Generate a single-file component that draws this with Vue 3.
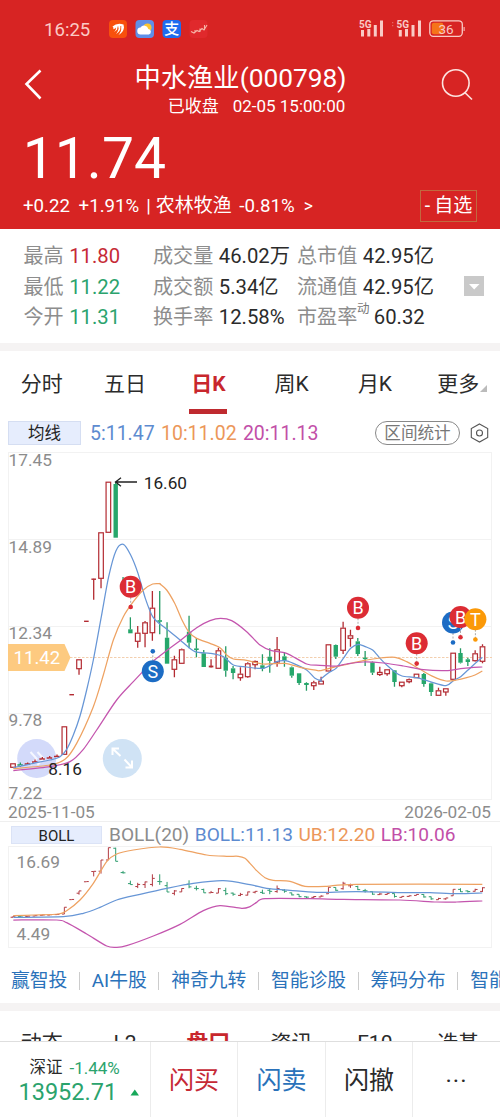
<script setup>
const round = (n) => Math.round(n * 100) / 100
const STEP = 7.336
const px = (i) => round(13 + i * STEP)

// [index, colour, high, low, bodyTop, bodyBottom] on the price chart's scale
const raw = [
  [0, 'r', 763.3, 767.3, 763.3, 767.3],
  [1, 'g', 762.5, 767, 764, 766],
  [2, 'r', 762.5, 765, 763, 764.5],
  [3, 'r', 759.5, 763, 761, 762.5],
  [4, 'r', 757, 760.5, 758, 759.5],
  [5, 'r', 756, 759, 757, 758.5],
  [6, 'r', 754.5, 757, 755.5, 756.5],
  [7, 'r', 726.3, 754.3, 726.3, 754.3],
  [8, 'r', 694.7, 694.7, 694.3, 695.1],
  [9, 'r', 659.3, 674.7, 659.3, 668.7],
  [10, 'r', 621.3, 621.3, 620.9, 621.7],
  [11, 'r', 579.3, 599.7, 578.8, 579.6],
  [12, 'r', 532.3, 588.3, 532.3, 578.3],
  [13, 'r', 481.7, 532.3, 481.7, 532.3],
  [14, 'g', 481.7, 537.7, 484, 537.7],
  [15, 'g', 577, 588, 584, 585],
  [16, 'g', 617.3, 633.3, 629.3, 633.3],
  [17, 'r', 626, 647.7, 632.7, 641.3],
  [18, 'r', 621, 647.3, 622.3, 633.3],
  [19, 'r', 591, 640.7, 607.7, 632.7],
  [20, 'g', 591, 634.3, 620.5, 621.5],
  [21, 'g', 622.3, 663.7, 637.7, 663.7],
  [22, 'r', 655.7, 677.3, 659.3, 669.3],
  [23, 'r', 648.5, 663.5, 649.3, 663.3],
  [24, 'g', 615.7, 648.3, 631.7, 642.7],
  [25, 'g', 638, 657.3, 648.7, 649.7],
  [26, 'g', 650, 667, 653.3, 667],
  [27, 'r', 659.3, 667.5, 665.9, 667.1],
  [28, 'r', 647.7, 668.3, 650.3, 668.3],
  [29, 'g', 646.3, 676.7, 658, 670.7],
  [30, 'g', 666, 679.3, 668.3, 673],
  [31, 'r', 667.3, 680.7, 673.7, 677.7],
  [32, 'r', 662.3, 677.7, 663.3, 676.7],
  [33, 'r', 660.5, 669.3, 661, 664.7],
  [34, 'g', 654.3, 671.3, 665.3, 668.7],
  [35, 'g', 648.3, 672.7, 656.7, 661],
  [36, 'r', 637, 666.7, 649.3, 662],
  [37, 'g', 652, 666.7, 656.3, 660.7],
  [38, 'g', 666.5, 677.7, 667.3, 675.7],
  [39, 'g', 673.3, 685, 673.3, 683],
  [40, 'g', 682.3, 690.7, 683.3, 684.7],
  [41, 'r', 680.7, 690, 682.3, 685.7],
  [42, 'r', 676.7, 684, 680.7, 684],
  [43, 'r', 644.3, 671, 644.3, 671],
  [44, 'g', 644.5, 659, 645, 656.7],
  [45, 'r', 621.7, 654, 627.7, 650.3],
  [46, 'r', 629.7, 646.7, 635.3, 638.3],
  [47, 'g', 638, 656, 641.3, 654],
  [48, 'g', 651, 666, 658, 658.8],
  [49, 'g', 661.5, 675, 662.3, 672.7],
  [50, 'r', 666.7, 676, 671.9, 674.5],
  [51, 'r', 669.3, 675.7, 669.3, 673.7],
  [52, 'g', 670, 686.7, 670.3, 682],
  [53, 'r', 681.7, 687.3, 681.7, 685.7],
  [54, 'r', 678.5, 683.3, 679.2, 681.7],
  [55, 'r', 673.7, 677.7, 673.7, 677.7],
  [56, 'g', 673, 686.7, 674, 684],
  [57, 'g', 682.5, 696, 683.3, 692],
  [58, 'r', 687.7, 695.3, 690.3, 695.3],
  [59, 'r', 688.3, 695.7, 688.3, 692],
  [60, 'r', 652.7, 679.3, 652.7, 679.3],
  [61, 'g', 648.3, 663.5, 653, 662.7],
  [62, 'g', 657.7, 666, 659.3, 662],
  [63, 'r', 650.3, 661.5, 653.3, 660.7],
  [64, 'r', 644.3, 663.3, 646.3, 661.3],
]
const candles = raw.map(([i, c, hi, lo, top, bottom]) => ({
  x: px(i), c, hi, lo, top, bottom, h: round(bottom - top),
  tiny: bottom - top < 2.2, early: i > 0 && i < 7,
}))

// the same quotes as open-high-low-close bars on the BOLL scale
const by = (y) => round(846.8 + (y - 478.1) * 0.2435)
const bars = candles.map((k) => {
  const open = by(k.c === 'r' ? k.bottom : k.top)
  const close = by(k.c === 'r' ? k.top : k.bottom)
  return {
    c: k.c,
    d: `M${k.x - 2.4} ${open}H${k.x}M${k.x} ${close}H${k.x + 2.4}M${k.x} ${by(k.hi)}V${by(k.lo)}`,
  }
})

// smooth curve through the points
function curve(p) {
  let d = `M${p[0][0]} ${p[0][1]}`
  for (let i = 0; i < p.length - 1; i++) {
    const a = p[i - 1] || p[i], b = p[i], c = p[i + 1], e = p[i + 2] || c
    const t = 7
    d += `C${round(b[0] + (c[0] - a[0]) / t)} ${round(b[1] + (c[1] - a[1]) / t)} ${round(c[0] - (e[0] - b[0]) / t)} ${round(c[1] - (e[1] - b[1]) / t)} ${c[0]} ${c[1]}`
  }
  return d
}
const seg = (ox, oy, pts) => pts.map(([x, y]) => [round(ox + x / 3), round(oy + y / 3)])

const ma5 = curve([
  ...seg(0, 470, [[40, 893], [100, 880], [150, 870], [180, 860], [200, 838], [220, 795], [240, 738], [260, 660], [280, 570], [304, 440], [326, 320], [348, 242], [370, 223], [392, 255], [414, 310], [436, 385], [458, 440], [480, 463]]),
  ...seg(160, 560, [[0, 192], [30, 215], [66, 245], [105, 275], [150, 280], [190, 290], [220, 315], [260, 321], [310, 325], [350, 305], [375, 302], [400, 310], [440, 330], [465, 355], [485, 363]]),
  ...seg(320, 580, [[0, 300], [26, 278], [48, 265], [70, 235], [92, 205], [115, 193], [136, 200], [158, 210], [180, 235], [200, 255], [224, 275], [246, 288], [290, 293], [330, 305], [378, 317], [400, 302], [422, 290], [444, 270], [466, 250], [487, 232]]),
])
const ma10 = curve([
  ...seg(0, 470, [[40, 896], [150, 885], [195, 868], [230, 820], [280, 710], [310, 615], [340, 510], [370, 440], [400, 395], [430, 360], [458, 342], [480, 341]]),
  ...seg(160, 560, [[0, 72], [20, 90], [44, 130], [66, 180], [88, 218], [110, 235], [150, 250], [180, 263], [200, 285], [220, 297], [260, 301], [310, 312], [375, 310], [420, 322], [470, 331]]),
  ...seg(320, 580, [[0, 272], [40, 262], [80, 253], [130, 242], [180, 234], [225, 232], [260, 245], [300, 268], [340, 290], [378, 303], [410, 300], [440, 293], [465, 285], [487, 273]]),
])
const ma20 = curve([
  ...seg(0, 470, [[40, 902], [150, 890], [210, 875], [250, 838], [290, 780], [350, 690], [400, 635], [458, 575]]),
  ...seg(160, 560, [[0, 287], [60, 242], [110, 203], [150, 182], [182, 175], [215, 182], [260, 215], [300, 255], [335, 272], [380, 280], [440, 312]]),
  ...seg(320, 580, [[0, 256], [50, 258], [80, 252], [130, 246], [190, 249], [250, 258], [310, 269], [378, 272], [430, 265], [487, 261]]),
])
const ub = curve([
  ...seg(0, 800, [[40, 347], [100, 345], [175, 342], [200, 332], [240, 300], [280, 250], [320, 185], [350, 162], [400, 150], [480, 141], [540, 148], [620, 165], [680, 169], [715, 169], [735, 175]]),
  ...seg(250, 800, [[0, 190], [20, 212], [45, 233], [70, 241], [120, 244], [165, 259], [230, 259], [320, 253], [697, 253]]),
])
const mid = curve([
  ...seg(0, 800, [[40, 352], [190, 350], [250, 340], [300, 322], [350, 300], [420, 283], [500, 265], [580, 250], [670, 242]]),
  ...seg(250, 800, [[0, 254], [50, 265], [120, 271], [200, 277], [320, 275], [480, 278], [540, 278], [620, 281], [697, 279]]),
])
const lb = curve([
  ...seg(0, 800, [[40, 360], [170, 360], [200, 368], [260, 402], [320, 438], [350, 442], [380, 437], [460, 408], [540, 373], [610, 332], [660, 317], [725, 325]]),
  ...seg(250, 800, [[0, 320], [20, 307], [45, 296], [180, 296], [280, 298], [450, 300], [560, 306], [620, 306], [697, 303]]),
])

const axis = [['17.45', 466], ['14.89', 552.7], ['12.34', 639], ['9.78', 725.7], ['7.22', 799]]
const marks = [
  { t: 'B', x: 130.7, y: 586.8, dot: 607, c: '#dc2c34' },
  { t: 'S', x: 152.8, y: 671.3, dot: 651.3, c: '#1c6cc4' },
  { t: 'B', x: 358, y: 607.8, dot: 628, c: '#dc2c34' },
  { t: 'B', x: 416.7, y: 643.2, dot: 663.6, c: '#dc2c34' },
  { t: 'S', x: 453, y: 622.5, dot: 642.5, c: '#1c6cc4' },
  { t: 'B', x: 460.5, y: 617, dot: 637.3, c: '#dc2c34' },
  { t: 'T', x: 475.4, y: 619.2, dot: 639.5, c: '#fb9908' },
]
const links = ['赢智投', 'AI牛股', '神奇九转', '智能诊股', '筹码分布', '智能盯盘']
const tabs = ['分时', '五日', '日K', '周K', '月K', '更多']
const tabs2 = ['动态', 'L2', '盘口', '资讯', 'F10', '选基']
</script>

<template>
  <div class="page">
    <header class="head">
      <div class="status">
        <span class="time">16:25</span>
        <svg class="apps" width="100" height="20" viewBox="0 0 100 20">
          <rect x="0" y="1" width="18" height="18" rx="4" fill="#f8500c" />
          <path d="M3.500 7.500Q8 3.500 14.500 5.500L15 8.500Q14.500 13 9.500 16Q12.500 12 12 8.500Q11 12.500 7 15Q10 11 9.500 8.200Q8.500 11.500 5 13Q7.500 10.500 7 8.500Q6 10 4 10.300Q5.500 9 3.500 7.500Z" fill="#fff" />
          <path d="M11.800 7Q12.500 11 10 14.500M9 7.500Q9 11 7 13.500" fill="none" stroke="#f8500c" stroke-width=".8" />
          <rect x="26.500" y="1" width="18.500" height="18" rx="4" fill="#5f8fe8" />
          <circle cx="38.500" cy="8.500" r="4" fill="#fbc531" />
          <path d="M32 15.500a3.500 3.500 0 0 1-.5-7a4.300 4.300 0 0 1 7.800 1.500a2.800 2.800 0 0 1 .5 5.500z" fill="#fff" />
          <rect x="53.500" y="1" width="18.500" height="18" rx="4" fill="#1e6cf0" />
          <text x="62.700" y="15.300" class="zhi">支</text>
          <rect x="80.500" y="1" width="18" height="18" rx="4" fill="#e0292c" />
          <path d="M82 12.500l3 1.500l3-2.500l2 1l3-3l2 1.500l3-5M86 13v-2M91 13V9.500M95.500 11V6" fill="none" stroke="#f6b5a8" stroke-width="1.100" />
        </svg>
        <svg class="signal" width="108" height="20" viewBox="0 0 108 20">
          <g fill="#f9cbc6">
            <text x="0" y="8.500" class="five">5G</text>
            <path d="M2 11h3v6.500h-3zM8.300 10h3v7.500h-3zM14.800 6h3v11.500h-3zM21 1.500h3v16h-3z" />
            <text x="37.500" y="8.500" class="five">5G</text>
            <path d="M39.800 11h3v6.500h-3zM46 10h3v7.500h-3zM52.500 6h3v11.500h-3zM59 1.500h3v16h-3z" />
            <path d="M33 3h1.300v1.300h-1.300zM33 6h1.300v1.300h-1.300z" opacity=".4" />
          </g>
          <rect x="72.800" y="3.800" width="11.500" height="11.500" rx="2" fill="#f5741a" />
          <rect x="70.800" y="1.800" width="32.500" height="15.500" rx="3.500" fill="none" stroke="#f9cbc6" stroke-width="1.300" />
          <path d="M104.600 8h1v4h-1z" fill="#f9cbc6" />
          <text x="79.500" y="14.500" class="batt">36</text>
        </svg>
      </div>
      <div class="titlebar">
        <svg width="30" height="34" viewBox="0 0 30 34"><path d="M21.500 3.500L7.500 17L21.500 31.500" fill="none" stroke="#fff" stroke-width="2.600" /></svg>
        <div class="titles">
          <h1>中水渔业(000798)</h1>
          <p><span>已收盘</span><span>02-05 15:00:00</span></p>
        </div>
        <svg width="36" height="36" viewBox="0 0 36 36"><g fill="none" stroke="#fde4e0" stroke-width="1.600"><circle cx="18.800" cy="16" r="13.300" /><path d="M27.800 25.500L35 32.500" /></g></svg>
      </div>
      <div class="price">11.74</div>
      <div class="change">
        <span class="c1">+0.22</span><span class="c2">+1.91%</span><span class="c3">|</span><span class="c4">农林牧渔</span><span class="c5">-0.81%</span><span class="c6">&gt;</span>
        <span class="fav">-<b>自选</b></span>
      </div>
    </header>

    <section class="stats">
      <div class="grid">
        <p><i>最高</i><span class="up">11.80</span></p><p><i>成交量</i><span>46.02万</span></p><p><i>总市值</i><span>42.95亿</span></p>
        <p><i>最低</i><span class="down">11.22</span></p><p><i>成交额</i><span>5.34亿</span></p><p><i>流通值</i><span>42.95亿</span></p>
        <p><i>今开</i><span class="down">11.31</span></p><p><i>换手率</i><span>12.58%</span></p><p><i>市盈率<sup>动</sup></i><span class="pe">60.32</span></p>
      </div>
      <svg class="expand" width="20" height="20" viewBox="0 0 20 20"><path d="M0 0h20v20H0z" fill="#c9c9c9" /><path d="M5 8h10.500L10.200 13.500z" fill="#fff" /></svg>
    </section>
    <div class="band"></div>

    <nav class="tabs">
      <span v-for="t in tabs" :key="t" :class="{ on: t === '日K', more: t === '更多' }">{{ t }}</span>
    </nav>

    <div class="ma">
      <span class="badge">均线</span>
      <span class="v blue">5:11.47</span><span class="v orange">10:11.02</span><span class="v pink">20:11.13</span>
      <span class="pill">区间统计</span>
      <svg width="20" height="22" viewBox="0 0 20 22"><g fill="none" stroke="#555" stroke-width="1.100"><path d="M9.500 2L17.700 6.500V15.500L9.500 20L1.300 15.500V6.500z" /><circle cx="9.500" cy="11" r="3" /></g></svg>
    </div>

    <svg class="chart" width="500" height="354" viewBox="0 448 500 354">
      <path class="gridline" d="M8 452.500H492M8 539.500H492M8 626.500H492M8 713.500H492M8 799.500H492M8.500 452V800M491.500 452V800" />
      <path d="M70 657.500H492" stroke="#f3cfae" stroke-dasharray="2.500 1.500" />
      <text v-for="a in axis" :key="a[0]" x="8.500" :y="a[1]" class="axis">{{ a[0] }}</text>
      <circle cx="36.700" cy="758.500" r="19.500" fill="#d3dafa" />
      <path d="M30.500 752l6 6.500l-6 6.500M37.500 752l6 6.500l-6 6.500" fill="none" stroke="#f5f7ff" stroke-width="2" />
      <circle cx="122.300" cy="758.500" r="19.500" fill="#d0e3f5" />
      <path d="M112.500 755V748.500H119M113 749L120.500 756M124.500 759.500L131.500 767M132 760.500V767.500H125.500" fill="none" stroke="#fff" stroke-width="2" />

      <g v-for="(k, n) in candles" :key="n" :class="k.c">
        <template v-if="k.early">
          <path :d="`M${k.x - 3} ${k.top + 1}H${k.x + 2.500}M${k.x} ${k.hi}V${k.lo}`" class="wick" stroke-dasharray="2.500 1" />
        </template>
        <template v-else>
          <path :d="`M${k.x} ${k.hi}V${k.top}M${k.x} ${k.bottom}V${k.lo}`" class="wick" />
          <rect v-if="k.tiny" :x="k.x - 2.300" :y="k.top - .3" width="4.600" :height="k.h + .6" class="solid" />
          <rect v-else-if="k.c === 'r'" :x="k.x - 2.300" :y="k.top + .5" width="4.600" :height="k.h - .5" class="hollow" />
          <rect v-else :x="k.x - 2.200" :y="k.top" width="4.400" :height="k.h" class="solid" />
        </template>
      </g>
      <path :d="ma5" class="line blueline" />
      <path :d="ma10" class="line orangeline" />
      <path :d="ma20" class="line pinkline" />

      <path d="M8 644H64.500L70.500 657.500L64.500 671H8z" fill="#fdca80" />
      <text x="13.500" y="664" class="axis tag">11.42</text>
      <path d="M137 482H115.500M121 477.700L115.500 482L121 486.300" fill="none" stroke="#222" stroke-width="1.300" />
      <text x="143.800" y="488.500" class="note">16.60</text>
      <text x="48.300" y="774.500" class="note low">8.16</text>

      <g v-for="(m, n) in marks" :key="'m' + n">
        <path :d="`M${m.x} ${m.y}V${m.dot}`" stroke="#aaa" stroke-dasharray="2 1.500" />
        <circle :cx="m.x" :cy="m.dot" r="2.300" :fill="m.c" />
        <circle :cx="m.x" :cy="m.y" r="11" :fill="m.c" />
        <text :x="m.x" :y="m.y + 6.500" class="mark">{{ m.t }}</text>
      </g>
    </svg>

    <div class="dates"><span>2025-11-05</span><span>2026-02-05</span></div>

    <div class="boll">
      <span class="badge">BOLL</span>
      <span class="gray">BOLL(20)</span><span class="blue">BOLL:11.13</span><span class="orange">UB:12.20</span><span class="pink">LB:10.06</span>
    </div>
    <svg class="chart" width="500" height="104" viewBox="0 846 500 104">
      <path class="gridline" d="M8 846.500H492M8 947.500H492M8.500 846V948M491.500 846V948" />
      <text x="16.500" y="868" class="axis">16.69</text>
      <text x="16.500" y="939.500" class="axis">4.49</text>
      <path v-for="(b, n) in bars" :key="n" :d="b.d" :class="['bar', b.c]" />
      <path :d="ub" class="line orangeline" />
      <path :d="mid" class="line blueline" />
      <path :d="lb" class="line pinkline" />
    </svg>

    <div class="links"><span v-for="l in links" :key="l">{{ l }}</span></div>
    <div class="band second"></div>
    <nav class="tabs2"><span v-for="t in tabs2" :key="t" :class="{ on: t === '盘口' }">{{ t }}</span></nav>

    <footer class="foot">
      <div class="index">
        <p><span>深证</span><em>-1.44%</em></p>
        <strong>13952.71<svg width="10" height="7" viewBox="0 0 10 7"><path d="M.5 6.500L4.800 .5L9 6.500z" fill="#17a85a" /></svg></strong>
      </div>
      <span class="buy">闪买</span><span class="sell">闪卖</span><span>闪撤</span><span class="dots">···</span>
    </footer>
  </div>
</template>

<style>
body { margin: 0; background: #fff; }
</style>

<style scoped>
.page { width: 500px; height: 1117px; overflow: hidden; display: flex; flex-direction: column; background: #fff; color: #2b2b2b; font-family: Roboto, "Noto Sans CJK SC", sans-serif; white-space: nowrap; }
.page > * { flex-shrink: 0; }
p, h1 { margin: 0; font-weight: 400; }
i, em, b, strong { font-style: normal; font-weight: 400; }
.head { height: 229px; background: #d72423; color: #fff; }
.status { display: flex; align-items: center; height: 58px; }
.time { width: 65px; padding-left: 44px; font-size: 18.600px; line-height: 22px; padding-top: 1px; color: #fbcac5; }
.apps { margin-right: 150px; }
.zhi { font-size: 15px; fill: #fff; text-anchor: middle; font-weight: 500; }
.five { font-size: 10px; font-weight: 700; }
.batt { font-size: 13.500px; fill: #f9cbc6; }
.titlebar { display: flex; height: 64px; align-items: flex-start; padding: 9px 27px 0 19px; box-sizing: border-box; }
.titles { flex: 1; text-align: center; display: flex; flex-direction: column; }
h1 { font-size: 26.300px; line-height: 38px; margin: -8px 0 0 -5px; }
.titles p { display: flex; justify-content: center; gap: 14px; font-size: 17px; line-height: 20px; margin: -1px 0 0 27px; }
.price { height: 68px; line-height: 74px; padding-left: 22.800px; font-size: 57px; }
.change { display: flex; align-items: center; height: 31px; padding: 0 23px; font-size: 18.700px; line-height: 26px; }
.c2 { margin-left: 8.500px; }
.c3 { margin-left: 7px; }
.c4 { margin-left: 5px; font-size: 19px; }
.c5 { margin-left: 7.500px; }
.c6 { margin-left: 9px; font-size: 17.500px; }
.fav { margin-left: auto; display: flex; align-items: center; justify-content: center; gap: 4px; width: 57px; height: 32px; box-sizing: border-box; border: 1px solid #c2683f; font-size: 19.500px; line-height: 32px; }
.fav b { font-size: 19px; padding-top: 1px; }
.stats { height: 114px; box-sizing: border-box; display: flex; align-items: center; justify-content: space-between; padding: 0 16px 0 23.500px; }
.grid { display: grid; grid-template-columns: 129.500px 144px 150px; grid-auto-rows: 30.500px; font-size: 20.300px; line-height: 33.500px; }
.grid p { display: flex; gap: 5.500px; height: 30.500px; }
.grid i { position: relative; color: #8d8d8d; font-size: 20.100px; }
.grid sup { position: absolute; left: 60px; top: -5.500px; font-size: 12.500px; line-height: 26px; color: #777; }
.pe { margin-left: 11px; }
.up { color: #c62a36; }
.down { color: #2ba36d; }
.band { height: 7.500px; background: #f5f3f3; }
.tabs { display: flex; height: 66.500px; font-size: 21px; }
.tabs span { width: 83.500px; text-align: center; line-height: 67px; position: relative; }
.tabs .on { color: #c8272d; font-weight: 700; }
.tabs .on::after { content: ""; position: absolute; left: 22px; bottom: 3.500px; width: 38px; height: 4.500px; background: #bf2a2f; }
.tabs .more::after { content: ""; position: absolute; left: 63.500px; top: 34px; border-left: 7.500px solid transparent; border-bottom: 7.500px solid #bbb; }
.ma { height: 31px; display: flex; align-items: center; padding: 0 10px 0 8px; box-sizing: border-box; font-size: 19.500px; line-height: 24px; }
.ma .badge { width: 73px; height: 24px; box-sizing: border-box; border: 1px solid #d5def2; background: #e6edfd; text-align: center; font-size: 16.500px; line-height: 24px; color: #222; margin-right: 9px; }
.v { margin-right: 6.300px; padding-top: 3px; }
.blue { color: #5d8bd0; }
.orange { color: #ec975a; }
.pink { color: #c24fa8; }
.pill { margin-left: auto; margin-right: 10px; width: 85px; height: 24px; box-sizing: border-box; border: 1px solid #888; border-radius: 12px; font-size: 16.600px; line-height: 24px; text-align: center; color: #777; }
.chart { display: block; }
.gridline { stroke: #f2f2f2; fill: none; stroke-width: 1; }
.axis { font-size: 17.300px; fill: #8c8c8c; }
.tag { font-size: 18.600px; fill: #fff; }
.note { font-size: 17.200px; fill: #222; }
.mark { font-size: 18px; fill: #fff; text-anchor: middle; }
.line { fill: none; stroke-width: 1.250; }
.blueline { stroke: #6796d6; }
.orangeline { stroke: #eea262; }
.pinkline { stroke: #c455ae; }
.r .wick, .r .hollow { stroke: #b32b32; }
.g .wick { stroke: #249a64; }
.wick { stroke-width: 1.300; fill: none; }
.hollow { fill: #fff; stroke-width: 1.200; }
.r .solid { fill: #b32b32; }
.g .solid { fill: #26a76b; }
.bar { fill: none; stroke-width: 1; }
.bar.r { stroke: #b23a42; }
.bar.g { stroke: #2f9d6f; }
.dates { height: 19px; display: flex; justify-content: space-between; padding: 0 9px 0 8px; font-size: 17.200px; line-height: 20px; color: #8c8c8c; }
.boll { height: 25px; border-top: 1px solid #efefef; box-sizing: border-box; display: flex; align-items: center; padding: 1px 0 0 11px; gap: 5.500px; font-size: 19.100px; line-height: 23px; }
.boll .badge { width: 91px; height: 18px; box-sizing: border-box; border: 1px solid #dbe3f6; background: #e6edfd; text-align: center; font-size: 15px; line-height: 18px; color: #222; margin-right: 1.500px; }
.gray { color: #8c8c8c; }
.links { height: 53px; display: flex; align-items: center; padding: 9px 0 0 11px; box-sizing: border-box; color: #2a72ba; font-size: 18.800px; overflow: hidden; }
.links span { display: flex; align-items: center; flex-shrink: 0; line-height: 28px; }
.links span + span::before { content: ""; width: 1px; height: 18px; background: #ccc; margin: 0 12px 0 11.500px; }
.second { height: 7.500px; }
.tabs2 { height: 30.500px; overflow: hidden; display: flex; font-size: 21px; line-height: 30px; }
.tabs2 span { width: 83.300px; text-align: center; padding-top: 17.500px; }
.tabs2 .on { color: #c8272d; font-weight: 700; font-size: 22px; }
.foot { height: 76px; box-sizing: border-box; border-top: 1px solid #dedede; display: grid; grid-template-columns: 150px 87px 88px 87px 88px; background: #fff; font-size: 25px; }
.foot > span { border-left: 1px solid #ececec; text-align: center; line-height: 78px; }
.index { padding: 14px 0 0 18.500px; }
.index p { display: flex; gap: 7px; padding-left: 11px; font-size: 16.500px; line-height: 24px; }
.index em, .index strong { color: #2ba36d; }
.index em { font-size: 17px; }
.index strong { display: flex; align-items: center; gap: 13px; font-size: 23.500px; line-height: 24px; }
.foot .buy { color: #c62a36; }
.foot .sell { color: #2a72ba; }
.foot .dots { font-size: 24px; letter-spacing: 1px; }
</style>
